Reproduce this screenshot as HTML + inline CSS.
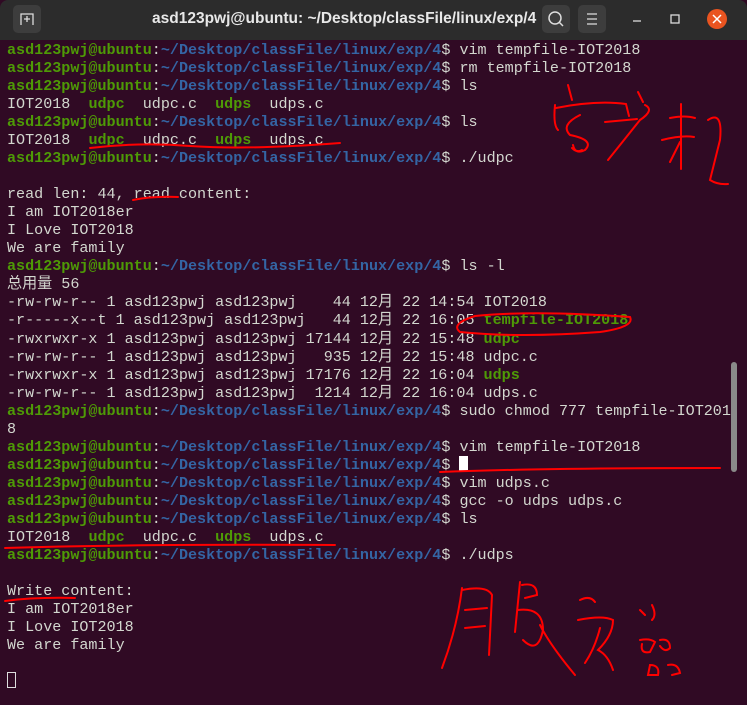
<!DOCTYPE html>
<html><head><meta charset="utf-8"><style>
body{margin:0;width:747px;height:705px;overflow:hidden;background:#300a24;position:relative;font-family:"Liberation Mono","Noto Sans CJK SC",monospace}
.tb{position:absolute;left:0;top:0;width:747px;height:40px;background:#2c2c2c;border-radius:8px 8px 0 0}
.title{position:absolute;left:152px;top:10px;white-space:nowrap;color:#e8e8e8;font:bold 15.5px "Liberation Sans",sans-serif;z-index:2}
.btn{position:absolute;top:5px;width:28px;height:28px;background:#3d3d3d;border-radius:5px}
pre{position:absolute;left:7px;top:41px;margin:0;font-size:15.08px;line-height:18.03px;color:#d3d7cf;font-family:"Liberation Mono","Noto Sans CJK SC",monospace}
.g{color:#4e9a06;font-weight:bold}.b{color:#3465a4;font-weight:bold}
.cur{display:inline-block;width:9px;height:16px;background:#fff;vertical-align:-3px}
.cur2{display:inline-block;width:9px;height:16px;border:1px solid #ddd;box-sizing:border-box;vertical-align:-3px}
</style></head><body>
<div class="tb"></div>
<div class="btn" style="left:13px"></div>
<svg style="position:absolute;left:13px;top:5px" width="28" height="28"><path d="M8 20 V9 H20 V20 M11 14 h6 M14 11 v6" stroke="#ddd" stroke-width="1.3" fill="none"/></svg>
<div class="btn" style="left:542px"></div>
<svg style="position:absolute;left:542px;top:5px" width="28" height="28"><circle cx="13" cy="13" r="6" stroke="#ddd" stroke-width="1.5" fill="none"/><path d="M17.5 17.5 L21 21" stroke="#ddd" stroke-width="1.5"/></svg>
<div class="btn" style="left:578px"></div>
<svg style="position:absolute;left:578px;top:5px" width="28" height="28"><path d="M9 9h10M9 14h10M9 19h10" stroke="#ddd" stroke-width="1.3"/></svg>
<div class="title">asd123pwj@ubuntu: ~/Desktop/classFile/linux/exp/4</div>
<svg style="position:absolute;left:630px;top:5px" width="117" height="30"><path d="M3 16h8" stroke="#ddd" stroke-width="1.3"/><rect x="41" y="10" width="8" height="8" stroke="#ddd" stroke-width="1.3" fill="none"/><circle cx="87" cy="14" r="10" fill="#e95420"/><path d="M83 10l8 8M91 10l-8 8" stroke="#fff" stroke-width="1.5"/></svg>
<pre><span class="g">asd123pwj@ubuntu</span>:<span class="b">~/Desktop/classFile/linux/exp/4</span>$ vim tempfile-IOT2018
<span class="g">asd123pwj@ubuntu</span>:<span class="b">~/Desktop/classFile/linux/exp/4</span>$ rm tempfile-IOT2018
<span class="g">asd123pwj@ubuntu</span>:<span class="b">~/Desktop/classFile/linux/exp/4</span>$ ls
IOT2018  <span class="g">udpc</span>  udpc.c  <span class="g">udps</span>  udps.c
<span class="g">asd123pwj@ubuntu</span>:<span class="b">~/Desktop/classFile/linux/exp/4</span>$ ls
IOT2018  <span class="g">udpc</span>  udpc.c  <span class="g">udps</span>  udps.c
<span class="g">asd123pwj@ubuntu</span>:<span class="b">~/Desktop/classFile/linux/exp/4</span>$ ./udpc

read len: 44, read content:
I am IOT2018er
I Love IOT2018
We are family
<span class="g">asd123pwj@ubuntu</span>:<span class="b">~/Desktop/classFile/linux/exp/4</span>$ ls -l
总用量 56
-rw-rw-r-- 1 asd123pwj asd123pwj    44 12月 22 14:54 IOT2018
-r-----x--t 1 asd123pwj asd123pwj   44 12月 22 16:05 <span class="g">tempfile-IOT2018</span>
-rwxrwxr-x 1 asd123pwj asd123pwj 17144 12月 22 15:48 <span class="g">udpc</span>
-rw-rw-r-- 1 asd123pwj asd123pwj   935 12月 22 15:48 udpc.c
-rwxrwxr-x 1 asd123pwj asd123pwj 17176 12月 22 16:04 <span class="g">udps</span>
-rw-rw-r-- 1 asd123pwj asd123pwj  1214 12月 22 16:04 udps.c
<span class="g">asd123pwj@ubuntu</span>:<span class="b">~/Desktop/classFile/linux/exp/4</span>$ sudo chmod 777 tempfile-IOT201
8
<span class="g">asd123pwj@ubuntu</span>:<span class="b">~/Desktop/classFile/linux/exp/4</span>$ vim tempfile-IOT2018
<span class="g">asd123pwj@ubuntu</span>:<span class="b">~/Desktop/classFile/linux/exp/4</span>$ <span class="cur"></span>
<span class="g">asd123pwj@ubuntu</span>:<span class="b">~/Desktop/classFile/linux/exp/4</span>$ vim udps.c
<span class="g">asd123pwj@ubuntu</span>:<span class="b">~/Desktop/classFile/linux/exp/4</span>$ gcc -o udps udps.c
<span class="g">asd123pwj@ubuntu</span>:<span class="b">~/Desktop/classFile/linux/exp/4</span>$ ls
IOT2018  <span class="g">udpc</span>  udpc.c  <span class="g">udps</span>  udps.c
<span class="g">asd123pwj@ubuntu</span>:<span class="b">~/Desktop/classFile/linux/exp/4</span>$ ./udps

Write content:
I am IOT2018er
I Love IOT2018
We are family

<span class="cur2"></span></pre>
<div style="position:absolute;left:731px;top:362px;width:6px;height:110px;background:#8a8a8a;border-radius:3px"></div>
<svg style="position:absolute;left:0;top:0" width="747" height="705" fill="none" stroke="#f00" stroke-width="2" stroke-linecap="round">
<path d="M568 85 l4 15 M555 105 q-2 20 3 25 M556 108 q40 -8 70 -4 l3 12 M580 115 q-20 10 -10 20 q25 5 15 15 q-10 5 -12 -5 M572 148 q5 5 10 2"/>
<path d="M638 92 l5 10 M645 105 q10 5 -5 15 q-20 25 -32 40 M605 122 l32 -3"/>
<path d="M670 118 q15 -3 25 0 M662 140 q20 -5 32 -3 M681 104 l0 65 M680 142 l-10 20 M708 120 q15 -10 12 20 l-10 40 q8 5 18 4"/>
<path d="M90 148 q50 -6 100 -2 q60 4 150 -3"/>
<path d="M133 200 q20 -4 45 -3"/>
<path d="M475 316 q60 -6 155 1 q5 10 -30 15 q-80 6 -140 0 q-10 -8 15 -16"/>
<path d="M440 472 q100 -4 280 -4"/>
<path d="M5 548 q120 -4 330 -3"/>
<path d="M5 601 q30 -4 70 -3"/>
<path d="M462 588 q-5 40 -20 80 M462 590 q25 -5 30 5 l-3 60 M465 610 l22 -2 M465 628 l20 -2"/>
<path d="M520 582 l-5 50 M522 585 q15 -3 15 10 l-12 3 M518 610 q25 -3 25 20 q-5 25 -20 10 M540 625 q10 20 35 50"/>
<path d="M580 600 q10 -5 15 2 M578 620 q25 -5 35 0 q0 15 -15 30 q10 5 15 20 M600 628 q-5 20 -15 35"/>
<path d="M640 610 l5 5 M652 605 q5 10 0 15 M640 640 q10 -2 15 2 l-5 10 q-10 2 -8 -8 M660 640 q10 -2 10 8 q-5 5 -10 -2 M650 665 q10 0 8 10 l-10 0 z M668 665 q10 -2 12 8 l-8 2"/>
</svg>
</body></html>
